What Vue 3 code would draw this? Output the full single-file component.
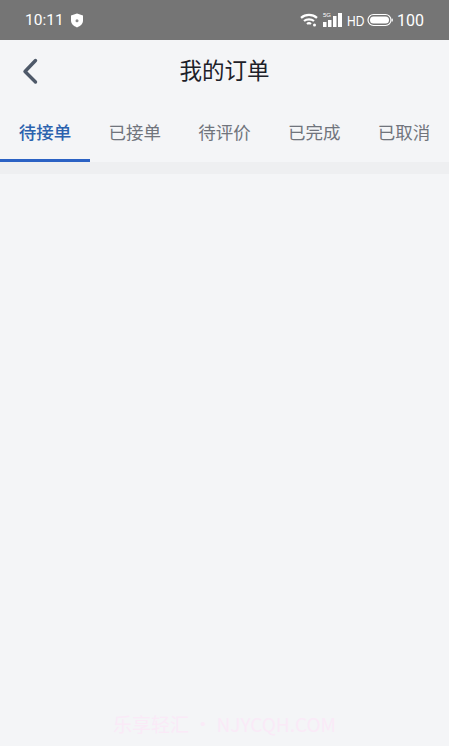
<template>
  <div class="page">
    <div class="status-bar">
      <div class="status-left">
        <span class="time">10:11</span>
        <svg class="shield" width="14" height="15" viewBox="0 0 14 15">
          <path d="M7 .6 13 2.400V7.500c0 3.200-2.500 5.600-6 6.900C3.500 13.100 1 10.700 1 7.500V2.400Z" fill="#fff" />
          <circle cx="7" cy="7.800" r="1.500" fill="#8a8a8a" />
        </svg>
      </div>
      <div class="status-right">
        <svg width="18" height="14" viewBox="0 0 18 14" fill="none" stroke="#fff" stroke-width="2.200">
          <path d="M1 4.800C5.500 .9 12.500 .9 17 4.800" />
          <path d="M4 8C6.800 5.700 11.200 5.700 14 8" />
          <path d="M7 11C8.200 10 9.800 10 11 11" />
          <circle cx="14.500" cy="12" r="1.500" fill="#fff" stroke="none" />
        </svg>
        <div class="signal">
          <span class="five-g">5G</span>
          <svg width="19" height="14" viewBox="0 0 19 14" fill="#fff">
            <rect x="0" y="9" width="3.500" height="5" />
            <rect x="5" y="7" width="3.500" height="7" />
            <rect x="10" y="3" width="3.500" height="11" />
            <rect x="15" y="0" width="4" height="14" />
          </svg>
        </div>
        <span class="hd">HD</span>
        <svg width="26" height="14" viewBox="0 0 26 14">
          <rect x="1" y="1.500" width="23" height="11" rx="5.500" fill="none" stroke="#fff" stroke-width="1.200" />
          <rect x="3" y="3.500" width="19" height="7" rx="3.500" fill="#fff" />
          <rect x="24.600" y="5.500" width="1.200" height="3" rx=".6" fill="#fff" />
        </svg>
        <span class="battery">100</span>
      </div>
    </div>

    <header class="nav">
      <svg class="back" width="18" height="28" viewBox="0 0 18 28" fill="none">
        <path d="M14.500 3.500 4 14.500 14.500 25" stroke="#4e5969" stroke-width="3.400" stroke-linecap="round" stroke-linejoin="round" />
      </svg>
      <h1 class="title">我的订单</h1>
    </header>

    <nav class="tabs">
      <div
        v-for="(tab, i) in tabs"
        :key="tab"
        class="tab"
        :class="{ active: i === 0 }"
      >
        {{ tab }}
      </div>
    </nav>
    <div class="band"></div>

    <div class="watermark">乐享轻汇 · NJYCQH.COM</div>
  </div>
</template>

<script setup>
const tabs = ['待接单', '已接单', '待评价', '已完成', '已取消']
</script>

<style>
html,
body {
  margin: 0;
  background: #f4f5f7;
}
</style>

<style scoped>
.page {
  position: relative;
  width: 449px;
  height: 746px;
  overflow: hidden;
  background: #f4f5f7;
  font-family: "Noto Sans CJK SC", "Liberation Sans", sans-serif;
}

.status-bar {
  height: 40px;
  box-sizing: border-box;
  padding: 0 25px;
  background: #757575;
  color: #fff;
  display: flex;
  align-items: center;
  justify-content: space-between;
}

.status-left,
.status-right {
  display: flex;
  align-items: center;
}

.time {
  font-family: Roboto, "Liberation Sans", sans-serif;
  font-size: 15.5px;
  margin-right: 6px;
}

.status-right {
  gap: 5px;
}

.signal {
  position: relative;
  display: flex;
}

.five-g {
  position: absolute;
  left: 0;
  top: -1px;
  font-size: 6px;
  line-height: 7px;
  font-family: "Liberation Sans", sans-serif;
}

.hd {
  font-family: "Liberation Sans", sans-serif;
  font-size: 15px;
  width: 15px;
  display: inline-block;
  transform: scaleX(.8);
  transform-origin: left center;
}

.battery {
  margin-left: -1px;
  font-family: Roboto, "Liberation Sans", sans-serif;
  font-size: 16px;
}

.nav {
  position: relative;
  height: 62px;
  display: flex;
  align-items: center;
  justify-content: center;
}

.back {
  position: absolute;
  left: 21px;
  top: 17px;
}

.title {
  margin: 0 0 5px;
  font-size: 22.5px;
  font-weight: 400;
  color: #1d2129;
}

.tabs {
  display: flex;
  height: 60px;
}

.tab {
  flex: 1;
  box-sizing: border-box;
  padding-bottom: 1px;
  display: flex;
  align-items: center;
  justify-content: center;
  font-size: 17.5px;
  color: #70747c;
}

.tab.active {
  color: #2b62ae;
  font-weight: 500;
  border-bottom: 3px solid #2b62c4;
  padding-bottom: 0;
  padding-top: 2px;
}

.band {
  height: 12px;
  background: #eeeff1;
}

.watermark {
  position: absolute;
  left: 0;
  right: 0;
  top: 710px;
  text-align: center;
  font-size: 19px;
  line-height: 28px;
  color: #faeaf7;
  white-space: nowrap;
}
</style>
